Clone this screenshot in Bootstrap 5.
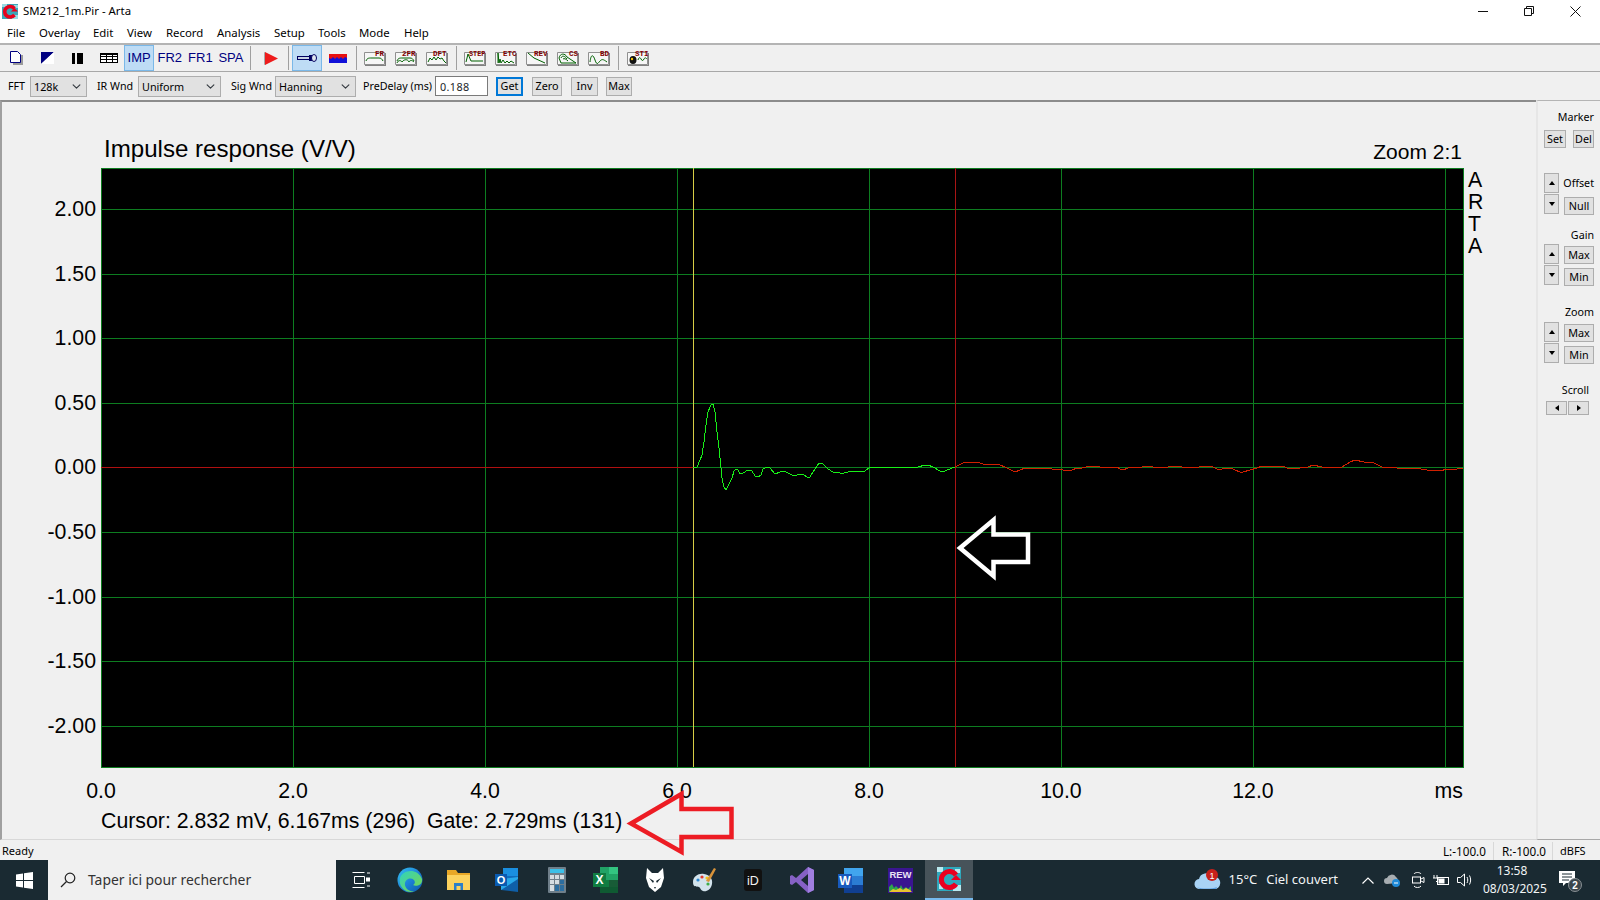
<!DOCTYPE html>
<html lang="fr">
<head>
<meta charset="utf-8">
<title>SM212_1m.Pir - Arta</title>
<link href="https://cdn.jsdelivr.net/npm/bootstrap@5.3.0/dist/css/bootstrap.min.css" rel="stylesheet">
<style>
:root{--ui:"Noto Sans","Open Sans",sans-serif;--ar:"Liberation Sans",Arial,sans-serif;}
html,body{height:100%;margin:0;}
body{width:1600px;height:900px;overflow:hidden;background:#f0f0f0;font-family:var(--ui);font-size:10.7px;color:#000;position:relative;}
svg{display:block;flex:none;}
.title-row{height:22px;background:#fff;font-size:11.4px;}
.title-row .app-name{margin-left:5px;}
.win-ctl{width:46px;}
.win-ctl-wrap{margin-right:2px;}
.menu-row{display:grid;grid-template-columns:32px 54px 34px 39px 51px 57px 44px 41px 45px 45px;height:21px;padding-left:7px;background:#fff;font-size:11.4px;line-height:22px;}
.tool-row{height:29px;border-top:2px solid #b4b4b4;border-bottom:1px solid #a8a8a8;padding-left:1.5px;}
.tb{width:30.6px;height:26px;border:1px solid transparent;color:#000080;font-family:var(--ar);font-size:13px;padding:0;}
.tb.wide{width:31.1px;}
.tb.on{background:#bedcf5;border-color:#7ab8e8;}
.tb-sep{width:1px;height:24px;background:#a0a0a0;margin:0 4px;}
.tb-sep.tight{margin:0 3px 0 2px;}
.tb-sep.s6{margin:0 2.8px;}
.tb-sep.s7{margin:0 3px;}
.ctl-row{height:28px;padding-left:8px;}
.lbl{white-space:nowrap;line-height:1;}
.w-fft{width:22px;}.w-ir{width:41px;margin-left:10px;}.w-sig{width:44px;margin-left:10px;}.w-pre{width:72px;margin-left:7px;}
.wsel.form-select{height:21px;border-radius:0;border:1px solid #adadad;background-color:#e1e1e1;padding:0 0 0 3px;font-size:10.8px;color:#000;background-position:right 4px center;background-size:11px 9px;line-height:19px;box-shadow:none;}
.s-fft.form-select{width:57px;}.s-ir.form-select{width:83px;}.s-sig.form-select{width:81px;}
.pre-input.form-control{width:53px;height:20px;margin-left:0;padding:0 4px;border:1px solid #7a7a7a;border-radius:0;font-size:10.8px;letter-spacing:.4px;min-height:0;}
.wbtn.btn{padding:0;border-radius:0;background:#e1e1e1;border:1px solid #adadad;color:#000;font-family:var(--ui);font-size:10.8px;line-height:1;display:flex;align-items:center;justify-content:center;}
.wbtn.focus-blue{border:2px solid #0078d7;}
.b-get{width:27px;height:19px;margin-left:8px;}.b-zero{width:30px;height:19px;margin-left:9px;}.b-inv{width:27px;height:19px;margin-left:9px;}.b-max{width:26px;height:19px;margin-left:8px;}
.main-row{height:740px;}
.plot-pane{width:1536px;height:740px;border-top:2px solid #8c8c8c;border-left:2px solid #a0a0a0;border-bottom:1px solid #d8d8d8;}
.side-pane{width:64px;height:740px;border-top:1px solid #b4b4b4;border-left:2px solid #e6e6e6;border-bottom:1px solid #a8a8a8;padding:9px 6px 0 6px;}
.plot-svg text{font-family:var(--ar);fill:#000;font-size:21.3px;}
.plot-svg .ttl{font-size:24.1px;}
.plot-svg .zoomtxt{font-size:21px;}
.side-label{height:14px;line-height:14px;white-space:nowrap;text-align:right;}
.set-b{width:22px;height:18px;}.del-b{width:21px;height:18px;}
.mt6{margin-top:6px;}.mt7{margin-top:7px;}.mt25{margin-top:25px;}.mt13{margin-top:13px;}.mt19{margin-top:19px;}.mt2{margin-top:2px;}.mt3{margin-top:3px;}.mt4{margin-top:4px;}
.gap7{gap:7px;}.gap1{gap:1px;}.gap4{gap:4px;}.gap5{gap:5px;}
.spin{width:15px;height:20px;}
.side-b{width:30px;height:18px;}
.offs{width:30px;}
.sc-wrap{margin-right:5px;}
.sc-b{width:21px;height:14px;}
.tri-u,.tri-d,.tri-l,.tri-r{width:0;height:0;border-style:solid;}
.tri-u{border-width:0 3.5px 4px 3.5px;border-color:transparent transparent #000 transparent;}
.tri-d{border-width:4px 3.5px 0 3.5px;border-color:#000 transparent transparent transparent;}
.tri-l{border-width:3.5px 4px 3.5px 0;border-color:transparent #000 transparent transparent;}
.tri-r{border-width:3.5px 0 3.5px 4px;border-color:transparent transparent transparent #000;}
.status-row{height:20px;padding:2px 0 0 2px;font-size:11px;line-height:18px;}
.st-l{width:50px;text-align:left;font-size:11.7px;}.st-r{width:59px;padding-left:8px;border-left:1px solid #d8d8d8;height:18px;line-height:18px;font-size:11.7px;}.st-u{width:48px;padding-left:7px;border-left:1px solid #d8d8d8;height:18px;line-height:18px;}
.task-row{height:40px;background:#1a2a32;color:#f2f5f6;}
.start-b{width:48px;height:40px;}
.search-b{width:288px;height:40px;background:#f0f0f0;color:#333;font-size:13.9px;padding-left:12px;gap:12px;}
.task-ic{width:49.05px;height:40px;}
.task-ic.on{width:48px;background:#47535a;border-bottom:2px solid #76b9ed;}
.tray{flex:1;position:relative;font-size:13px;}
.wx-cloud{margin-left:221px;}
.wx-t{margin-left:7px;}.wx-c{margin-left:9px;}
.tr-ch{margin-left:24px;}.tr-1{margin-left:10px;}.tr-2{margin-left:11px;}.tr-3{margin-left:8px;}.tr-4{margin-left:8px;}
.clock{margin-left:10px;width:58px;font-size:12px;line-height:18px;text-align:center;white-space:nowrap;}
.notif{margin-left:17px;}
.overlay-svg{position:absolute;left:0;top:0;pointer-events:none;}
</style>
</head>
<body>
<div class="title-row d-flex align-items-center">
  <svg class="ms-0" width="18" height="18" viewBox="0 0 18 18"><rect x="2" y="2" width="16" height="15" fill="#3aa6b8"/><path d="M2 2h5v3H2zM12 13h6v4h-6zM14 3h4v3h-4z" fill="#9adbe4"/><path d="M14.5 6.5A5.5 5.2 0 1 0 14.5 13" fill="none" stroke="#e8001c" stroke-width="3.6"/><path d="M11 9.5h7l-3.5-3.6z" fill="#e8001c"/></svg>
  <span class="app-name">SM212_1m.Pir - Arta</span>
  <div class="ms-auto d-flex win-ctl-wrap">
    <div class="win-ctl d-flex justify-content-center"><svg width="10" height="10" viewBox="0 0 10 10"><path d="M0 5.5h10" stroke="#111" fill="none"/></svg></div>
    <div class="win-ctl d-flex justify-content-center"><svg width="10" height="10" viewBox="0 0 10 10"><path d="M.5 2.5h7v7h-7zM2.5 2.5v-2h7v7h-2" stroke="#111" fill="none"/></svg></div>
    <div class="win-ctl d-flex justify-content-center"><svg width="11" height="11" viewBox="0 0 11 11"><path d="M.5.5l10 10M10.5.5l-10 10" stroke="#111" fill="none"/></svg></div>
  </div>
</div>
<nav class="menu-row"><span>File</span><span>Overlay</span><span>Edit</span><span>View</span><span>Record</span><span>Analysis</span><span>Setup</span><span>Tools</span><span>Mode</span><span>Help</span></nav>

<div class="tool-row d-flex align-items-center">
  <div class="tb d-flex align-items-center justify-content-center"><svg width="14" height="14" viewBox="0 0 14 14"><path d="M3 4h10v10H3z" fill="#9a9a9a"/><path d="M.5.5h7l3 3v8h-10z" fill="#fff" stroke="#000080"/></svg></div>
  <div class="tb d-flex align-items-center justify-content-center"><svg width="13" height="12" viewBox="0 0 13 12"><path d="M0 0h13L0 12z" fill="#000080"/><path d="M13 0v12H0z" fill="#fff"/></svg></div>
  <div class="tb d-flex align-items-center justify-content-center"><svg width="11" height="11" viewBox="0 0 11 11"><rect width="3" height="11"/><rect x="5" width="6" height="11"/></svg></div>
  <div class="tb d-flex align-items-center justify-content-center"><svg width="18" height="10" viewBox="0 0 18 10" shape-rendering="crispEdges"><path d="M.5.5h17v9H.5zM.5 3.5h17M.5 6.5h17M6.5.5v9M12.5.5v9" fill="#fff" stroke="#000"/><path d="M0 0h18v2H0z"/></svg></div>
  <div class="tb on d-flex align-items-center justify-content-center">IMP</div>
  <div class="tb d-flex align-items-center justify-content-center">FR2</div>
  <div class="tb d-flex align-items-center justify-content-center">FR1</div>
  <div class="tb d-flex align-items-center justify-content-center">SPA</div>
  <div class="tb-sep"></div>
  <div class="tb d-flex align-items-center justify-content-center"><svg width="16" height="15" viewBox="0 0 16 15"><path d="M1 1v13l2-1V2z" fill="#a8a8a8"/><path d="M2 1l13 6.5L2 14z" fill="#ee1c1c"/></svg></div>
  <div class="tb-sep tight"></div>
  <div class="tb on d-flex align-items-center justify-content-center"><svg width="20" height="8" viewBox="0 0 20 8"><rect x=".5" y="2.5" width="12" height="3" fill="#c8d4e4" stroke="#000060"/><rect x="12" y="1" width="4" height="6" fill="#000060"/><ellipse cx="17" cy="4" rx="2.5" ry="3.5" fill="#dfe6ee" stroke="#000060"/></svg></div>
  <div class="tb d-flex align-items-center justify-content-center"><svg width="18" height="9" viewBox="0 0 18 9"><rect width="18" height="9" fill="#1111d8"/><path d="M0 0h18v4l-2-1-2 2-2-2-2 2-2-2-2 2-2-2-2 2-2-1z" fill="#e81010"/></svg></div>
  <div class="tb-sep s6"></div>
  <div class="tb wide d-flex align-items-center justify-content-center"><svg width="22" height="16" viewBox="0 0 22 16"><path d="M.5 2.5h20v12H.5z" fill="#f6f6f6" stroke="#909090"/><path d="M1 15.5h21M21.5 3v13" stroke="#808080" fill="none"/><path d="M2 11c1-3 3-3 5-3h8c2 0 3 1 4 3" fill="none" stroke="#006000"/><text x="11" y="6" font-family="Liberation Mono" font-size="7.5" font-weight="700" fill="#800000">FR</text></svg></div>
  <div class="tb wide d-flex align-items-center justify-content-center"><svg width="22" height="16" viewBox="0 0 22 16"><path d="M.5 2.5h20v12H.5z" fill="#f6f6f6" stroke="#909090"/><path d="M1 15.5h21M21.5 3v13" stroke="#808080" fill="none"/><path d="M2 11c1-3 3-3 5-3h8c2 0 3 1 4 3M2 13c1-3 4-3 5-1 2-3 6-3 7 0 1-2 3-2 5 0" fill="none" stroke="#006000"/><text x="7" y="6" font-family="Liberation Mono" font-size="7.5" font-weight="700" fill="#800000">2FR</text></svg></div>
  <div class="tb wide d-flex align-items-center justify-content-center"><svg width="22" height="16" viewBox="0 0 22 16"><path d="M.5 2.5h20v12H.5z" fill="#f6f6f6" stroke="#909090"/><path d="M1 15.5h21M21.5 3v13" stroke="#808080" fill="none"/><path d="M2 12l2-4 2 2 2-3 2 3 2-3 2 2 2-1 2 3 2 2" fill="none" stroke="#006000"/><text x="7" y="6" font-family="Liberation Mono" font-size="7.5" font-weight="700" fill="#800000">DFT</text></svg></div>
  <div class="tb-sep s6"></div>
  <div class="tb wide d-flex align-items-center justify-content-center"><svg width="22" height="16" viewBox="0 0 22 16"><path d="M.5 2.5h20v12H.5z" fill="#f6f6f6" stroke="#909090"/><path d="M1 15.5h21M21.5 3v13" stroke="#808080" fill="none"/><path d="M2 12l2-8 3 7h12" fill="none" stroke="#006000"/><text x="5" y="6" font-family="Liberation Mono" font-size="6.8" font-weight="700" fill="#800000">STEP</text></svg></div>
  <div class="tb wide d-flex align-items-center justify-content-center"><svg width="22" height="16" viewBox="0 0 22 16"><path d="M.5 2.5h20v12H.5z" fill="#f6f6f6" stroke="#909090"/><path d="M1 15.5h21M21.5 3v13" stroke="#808080" fill="none"/><path d="M3 13V3l1 10 1-4 1 4 2-3 2 3 2-2 2 2 2-2 3 2" fill="none" stroke="#006000"/><text x="8" y="6" font-family="Liberation Mono" font-size="7.5" font-weight="700" fill="#800000">ETC</text></svg></div>
  <div class="tb wide d-flex align-items-center justify-content-center"><svg width="22" height="16" viewBox="0 0 22 16"><path d="M.5 2.5h20v12H.5z" fill="#f6f6f6" stroke="#909090"/><path d="M1 15.5h21M21.5 3v13" stroke="#808080" fill="none"/><path d="M2 3l6 5 11 5" fill="none" stroke="#006000"/><text x="8" y="6" font-family="Liberation Mono" font-size="7.5" font-weight="700" fill="#800000">REV</text></svg></div>
  <div class="tb wide d-flex align-items-center justify-content-center"><svg width="22" height="16" viewBox="0 0 22 16"><path d="M.5 2.5h20v12H.5z" fill="#f6f6f6" stroke="#909090"/><path d="M1 15.5h21M21.5 3v13" stroke="#808080" fill="none"/><path d="M2 8c1-5 6-5 8-1l9 6H4zM4 8c1-3 4-2 6 1M6 9c1-1 3 0 5 2" fill="none" stroke="#006000"/><text x="12" y="6" font-family="Liberation Mono" font-size="7.5" font-weight="700" fill="#800000">CS</text></svg></div>
  <div class="tb wide d-flex align-items-center justify-content-center"><svg width="22" height="16" viewBox="0 0 22 16"><path d="M.5 2.5h20v12H.5z" fill="#f6f6f6" stroke="#909090"/><path d="M1 15.5h21M21.5 3v13" stroke="#808080" fill="none"/><path d="M2 12c1-8 3-8 5-2s3 3 5 1 3-2 7 1" fill="none" stroke="#006000"/><text x="12" y="6" font-family="Liberation Mono" font-size="7.5" font-weight="700" fill="#800000">BD</text></svg></div>
  <div class="tb-sep s7"></div>
  <div class="tb wide d-flex align-items-center justify-content-center"><svg width="22" height="16" viewBox="0 0 22 16"><path d="M.5 2.5h20v12H.5z" fill="#f6f6f6" stroke="#909090"/><path d="M1 15.5h21M21.5 3v13" stroke="#808080" fill="none"/><ellipse cx="6" cy="10" rx="3.5" ry="4" fill="#111"/><circle cx="5" cy="9" r="1.2" fill="#f3c300"/><path d="M11 10c1-3 2-3 3-1s2 2 3 0 2-1 3 0" fill="none" stroke="#006000"/><text x="8" y="6" font-family="Liberation Mono" font-size="7.5" font-weight="700" fill="#800000">STI</text></svg></div>
</div>

<div class="ctl-row d-flex align-items-center">
  <span class="lbl w-fft">FFT</span>
  <select class="form-select wsel s-fft"><option>128k</option></select>
  <span class="lbl w-ir">IR Wnd</span>
  <select class="form-select wsel s-ir"><option>Uniform</option></select>
  <span class="lbl w-sig">Sig Wnd</span>
  <select class="form-select wsel s-sig"><option>Hanning</option></select>
  <span class="lbl w-pre">PreDelay (ms)</span>
  <input class="form-control pre-input" value="0.188">
  <button class="btn wbtn focus-blue b-get">Get</button>
  <button class="btn wbtn b-zero">Zero</button>
  <button class="btn wbtn b-inv">Inv</button>
  <button class="btn wbtn b-max">Max</button>
</div>

<div class="main-row d-flex">
  <div class="plot-pane">
    <svg class="plot-svg" width="1534" height="737" viewBox="2 102 1534 737">
      <rect x="101" y="168" width="1362" height="599" fill="#000"/>
      <g stroke="#0d7d20" fill="none" shape-rendering="crispEdges">
        <path d="M293.5 168v599M485.5 168v599M677.5 168v599M869.5 168v599M1061.5 168v599M1253.5 168v599M1445.5 168v599"/>
        <path d="M101 209.5h1362M101 274.5h1362M101 338.5h1362M101 403.5h1362M693 467.5h770M101 532.5h1362M101 597.5h1362M101 661.5h1362M101 726.5h1362"/>
        <rect x="101.5" y="168.5" width="1362" height="599"/>
      </g>
      <g fill="none" shape-rendering="crispEdges">
        <path d="M101 467.5h592" stroke="#b01010"/>
        <path d="M693.5 168v599" stroke="#d6cc45"/>
        <path d="M955.5 168v599" stroke="#a81515"/>
        <polyline stroke="#18f018" points="693,467 697,467 700,460 702,455 704,442 706,425 708,412 711,405 713,404 715,412 717,432 719,448 721,468 722,478 724,487 726,490 728,486 732,478 734,471 736,469 738,470 740,474 743,473 748,470 752,471 755,476 758,477 761,475 763,469 767,467 770,468 775,474 780,472 784,471 788,473 794,476 797,475 803,474 807,477 810,477 813,472 817,466 819,463 822,463 828,469 833,472 840,473 844,473 848,472 865,471 870,467 905,467 911,468 918,467 925,465 928,465 933,467 940,471 945,471 952,468 955,467"/>
        <polyline stroke="#d02000" points="955,467 963,463 970,462 977,462 983,464 998,464 1007,468 1015,472 1025,468 1033,468 1052,469 1060,469 1063,470 1072,470 1077,468 1082,468 1090,466 1098,466 1100,467 1117,467 1120,469 1123,470 1128,468 1142,467 1143,466 1151,466 1153,467 1168,467 1170,466 1181,466 1182,467 1199,467 1201,466 1211,466 1217,469 1222,469 1226,468 1231,468 1235,470 1240,472 1243,472 1250,470 1257,468 1262,466 1279,466 1285,467 1287,468 1300,468 1308,467 1313,465 1322,467 1342,467 1350,462 1355,460 1364,462 1372,462 1382,467 1388,467 1397,468 1415,468 1427,470 1442,471 1445,469 1457,469 1463,468"/>
      </g>
      <text class="ttl" x="104" y="157">Impulse response (V/V)</text>
      <text class="zoomtxt" x="1462" y="159" text-anchor="end">Zoom 2:1</text>
      <text x="1468" y="187">A</text><text x="1468" y="209">R</text><text x="1468" y="231">T</text><text x="1468" y="253">A</text>
      <g text-anchor="end">
        <text x="96" y="216">2.00</text><text x="96" y="281">1.50</text><text x="96" y="345">1.00</text><text x="96" y="410">0.50</text><text x="96" y="474">0.00</text><text x="96" y="539">-0.50</text><text x="96" y="604">-1.00</text><text x="96" y="668">-1.50</text><text x="96" y="733">-2.00</text>
      </g>
      <g text-anchor="middle">
        <text x="101" y="798">0.0</text><text x="293" y="798">2.0</text><text x="485" y="798">4.0</text><text x="677" y="798">6.0</text><text x="869" y="798">8.0</text><text x="1061" y="798">10.0</text><text x="1253" y="798">12.0</text>
      </g>
      <text x="1463" y="798" text-anchor="end">ms</text>
      <text x="101" y="828" xml:space="preserve">Cursor: 2.832 mV, 6.167ms (296)  Gate: 2.729ms (131)</text>
    </svg>
  </div>
  <aside class="side-pane d-flex flex-column align-items-end">
    <div class="side-label">Marker</div>
    <div class="d-flex gap7 mt6"><button class="btn wbtn set-b">Set</button><button class="btn wbtn del-b">Del</button></div>

    <div class="d-flex gap5 mt25">
      <div class="d-flex flex-column gap1"><button class="btn wbtn spin"><i class="tri-u"></i></button><button class="btn wbtn spin"><i class="tri-d"></i></button></div>
      <div class="offs d-flex flex-column align-items-end"><div class="side-label mt3">Offset</div><button class="btn wbtn side-b mt7">Null</button></div>
    </div>

    <div class="side-label mt13">Gain</div>
    <div class="d-flex gap5 mt2">
      <div class="d-flex flex-column gap1"><button class="btn wbtn spin"><i class="tri-u"></i></button><button class="btn wbtn spin"><i class="tri-d"></i></button></div>
      <div class="d-flex flex-column gap4 mt2"><button class="btn wbtn side-b">Max</button><button class="btn wbtn side-b">Min</button></div>
    </div>

    <div class="side-label mt19">Zoom</div>
    <div class="d-flex gap5 mt3">
      <div class="d-flex flex-column gap1"><button class="btn wbtn spin"><i class="tri-u"></i></button><button class="btn wbtn spin"><i class="tri-d"></i></button></div>
      <div class="d-flex flex-column gap4 mt2"><button class="btn wbtn side-b">Max</button><button class="btn wbtn side-b">Min</button></div>
    </div>

    <div class="side-label mt19 sc-wrap">Scroll</div>
    <div class="d-flex mt4 gap1 sc-wrap"><button class="btn wbtn sc-b"><i class="tri-l"></i></button><button class="btn wbtn sc-b"><i class="tri-r"></i></button></div>
  </aside>
</div>

<div class="status-row d-flex align-items-center">
  <span>Ready</span>
  <span class="ms-auto st-l">L:-100.0</span><span class="st-r">R:-100.0</span><span class="st-u">dBFS</span>
</div>

<footer class="task-row d-flex align-items-center">
  <div class="start-b d-flex align-items-center justify-content-center"><svg width="17" height="17" viewBox="0 0 17 17"><path d="M0 2.4L7 1.4V8H0zM8 1.3L17 0v8H8zM0 9h7v6.6L0 14.6zM8 9h9v8l-9-1.3z" fill="#fff"/></svg></div>
  <div class="search-b d-flex align-items-center"><svg width="16" height="16" viewBox="0 0 16 16"><circle cx="10" cy="6" r="4.8" fill="none" stroke="#222" stroke-width="1.2"/><path d="M6.5 9.5L1 15" stroke="#222" stroke-width="1.3"/></svg><span>Taper ici pour rechercher</span></div>
  <div class="d-flex">
    <div class="task-ic d-flex align-items-center justify-content-center"><svg width="18" height="18" viewBox="0 0 18 18" fill="none" stroke="#fff"><path d="M.5 1.5h12M.5 16.5h12M2.5 5.5h10v7h-10z"/><path d="M15 2h3M15 15h3" /><rect x="14.5" y="7" width="3" height="3" fill="#fff"/></svg></div>
    <div class="task-ic d-flex align-items-center justify-content-center"><svg width="26" height="26" viewBox="0 0 26 26"><defs><linearGradient id="edg" x1="0" y1="0" x2="1" y2="1"><stop offset="0" stop-color="#35c1f1"/><stop offset=".55" stop-color="#1b7fd6"/><stop offset="1" stop-color="#0c59a4"/></linearGradient><linearGradient id="edg2" x1="0" y1="0" x2="1" y2="1"><stop offset="0" stop-color="#2ed3c0"/><stop offset="1" stop-color="#7cd64a"/></linearGradient></defs><circle cx="13" cy="13" r="12.5" fill="url(#edg)"/><path d="M3 11C5 3 20 0 25 12c1 6-6 8-9 6 4-2 1-8-5-6-4 2-4 7-1 10 1 1 4 3 7 2.5C9 27 1 20 3 11z" fill="url(#edg2)"/></svg></div>
    <div class="task-ic d-flex align-items-center justify-content-center"><svg width="23" height="22" viewBox="0 0 23 22"><path d="M0 1h9l2 3h12v16H0z" fill="#e8a727"/><path d="M0 6h23v15H0z" fill="#fcd25e"/><path d="M7 14h9v7h-2.5v-4h-4v4H7z" fill="#2c7fc9"/></svg></div>
    <div class="task-ic d-flex align-items-center justify-content-center"><svg width="25" height="24" viewBox="0 0 25 24"><path d="M8 0h15v8H8z" fill="#1a8fe0"/><path d="M8 8h15v5H8z" fill="#0f6cbd"/><path d="M6 11l17-2v13H6z" fill="#28a8ea"/><path d="M6 22l17-11v13z" fill="#0f5fa8"/><rect y="6" width="12" height="12" fill="#0a5ab0"/><text x="6" y="16" text-anchor="middle" font-family="Liberation Sans" font-weight="700" font-size="11" fill="#fff">O</text></svg></div>
    <div class="task-ic d-flex align-items-center justify-content-center"><svg width="18" height="26" viewBox="0 0 18 26"><rect width="18" height="26" rx="1" fill="#6f7f8a"/><rect x="2" y="2" width="14" height="4" fill="#3cc0e8"/><g fill="#d5dde2"><rect x="2" y="8" width="4" height="4"/><rect x="7" y="8" width="4" height="4"/><rect x="12" y="8" width="4" height="4"/><rect x="2" y="13" width="4" height="4"/><rect x="7" y="13" width="4" height="4"/><rect x="2" y="18" width="4" height="6"/></g><g fill="#2c6ea0"><rect x="12" y="13" width="4" height="4"/><rect x="7" y="18" width="4" height="6"/><rect x="12" y="18" width="4" height="6"/></g></svg></div>
    <div class="task-ic d-flex align-items-center justify-content-center"><svg width="25" height="26" viewBox="0 0 25 26"><path d="M7 0h18v26H7z" fill="#21a366"/><path d="M16 0h9v7h-9z" fill="#33c481"/><path d="M7 13h9v7H7z" fill="#107c41"/><path d="M16 13h9v7h-9z" fill="#185c37"/><path d="M7 20h18v6H7z" fill="#0f5a32"/><rect y="6" width="13" height="14" fill="#107c41"/><text x="6.5" y="17" text-anchor="middle" font-family="Liberation Sans" font-weight="700" font-size="12" fill="#fff">X</text></svg></div>
    <div class="task-ic d-flex align-items-center justify-content-center"><svg width="18" height="24" viewBox="0 0 18 24"><path d="M1 0l5 5h6l5-5 1 10-3 9-6 5-6-5-3-9z" fill="#fff"/><path d="M3 10l5 3-1 2zM15 10l-5 3 1 2z" fill="#1a2a32"/><path d="M8 19h2l-1 2z" fill="#1a2a32"/></svg></div>
    <div class="task-ic d-flex align-items-center justify-content-center"><svg width="24" height="26" viewBox="0 0 24 26"><path d="M1 15C1 9 7 6 12 7c6 1 9 5 8 10-1 6-6 8-9 7C8 23 9 21 7 20c-2-1-6 1-6-5z" fill="#d3e3ec"/><circle cx="6" cy="13" r="1.6" fill="#2b87d1"/><circle cx="10" cy="10" r="1.6" fill="#e03a2f"/><circle cx="15" cy="11" r="1.6" fill="#f5c518"/><circle cx="16" cy="17" r="1.6" fill="#3fae49"/><path d="M14 14L22 1l2 1-7 13z" fill="#d8933a"/></svg></div>
    <div class="task-ic d-flex align-items-center justify-content-center"><svg width="18" height="22" viewBox="0 0 18 22"><rect width="18" height="22" rx="3" fill="#111"/><text x="9" y="15.5" text-anchor="middle" font-family="Liberation Sans" font-size="12.5" fill="#f2f2f2">iD</text></svg></div>
    <div class="task-ic d-flex align-items-center justify-content-center"><svg width="24" height="26" viewBox="0 0 24 26"><path d="M18 0l6 3v20l-6 3L6 15l-4 3-2-1V9l2-1 4 3zM18 7l-7 6 7 6z" fill="#8661c5"/><path d="M18 0l6 3v20l-6 3z" fill="#a07ee0"/></svg></div>
    <div class="task-ic d-flex align-items-center justify-content-center"><svg width="25" height="25" viewBox="0 0 25 25"><path d="M6 0h19v25H6z" fill="#2b7cd3"/><path d="M6 0h19v8H6z" fill="#41a5ee"/><path d="M6 17h19v8H6z" fill="#103f91"/><rect y="6" width="14" height="14" fill="#185abd"/><text x="7" y="17" text-anchor="middle" font-family="Liberation Sans" font-weight="700" font-size="12" fill="#fff">W</text></svg></div>
    <div class="task-ic d-flex align-items-center justify-content-center"><svg width="25" height="25" viewBox="0 0 25 25"><rect width="25" height="25" fill="#3a1590"/><text x="12.5" y="10" text-anchor="middle" font-family="Liberation Sans" font-weight="700" font-size="9.5" fill="#e9e3f5">REW</text><path d="M1 24V19l3-3 2 4 2-2 3 3 2-4 2 4 3-2 2 2 3-3v6z" fill="#2ea64a"/><path d="M1 24l4-3 3 1 4-2 3 2 3-2 4 2 2 2z" fill="#e8c430"/></svg></div>
    <div class="task-ic on d-flex align-items-center justify-content-center"><svg width="24" height="24" viewBox="0 0 24 24"><rect width="24" height="24" fill="#2fa9bd"/><path d="M0 0h6v5H0zM16 18h8v6h-8zM18 2h5v4h-5zM2 17h4v5H2z" fill="#b9e9ef"/><path d="M19 8A8 8 0 1 0 19 17" fill="none" stroke="#ea0020" stroke-width="5"/><path d="M14 13h10l-5-5z" fill="#ea0020"/></svg></div>
  </div>
  <div class="tray d-flex align-items-center">
    <div class="wx-cloud position-relative"><svg width="28" height="24" viewBox="0 0 28 24"><path d="M6 21a5 5 0 0 1-1-10 7 7 0 0 1 13-2 6 6 0 0 1 4 12z" fill="#a9d3f5"/><path d="M3 19c4 2 15 2 20 0l-1 2H6z" fill="#5c9fe0"/><circle cx="18" cy="7" r="6" fill="#c8211b"/><text x="18" y="10.5" text-anchor="middle" font-family="Liberation Sans" font-size="9" fill="#fff">1</text></svg></div>
    <span class="wx-t">15°C</span><span class="wx-c">Ciel couvert</span>
    <svg class="tr-ch" width="12" height="7" viewBox="0 0 12 7"><path d="M.5 6.5L6 1l5.500 5.500" fill="none" stroke="#fff" stroke-width="1.2"/></svg>
    <svg class="tr-1" width="17" height="13" viewBox="0 0 17 13"><path d="M3 10a3 3 0 0 1 0-6 5 5 0 0 1 9-1 4 4 0 0 1 1 6z" fill="#a7adb1"/><circle cx="12" cy="9" r="4" fill="#1f8ad8"/><path d="M10 9h4" stroke="#fff"/></svg>
    <svg class="tr-2" width="13" height="18" viewBox="0 0 13 18" fill="none" stroke="#fff"><path d="M2 3c1-2 6-2 7 0M2 15c1 2 6 2 7 0"/><rect x=".5" y="6" width="8" height="6"/><path d="M9 8l3-1.500v5L9 10"/></svg>
    <svg class="tr-3" width="16" height="12" viewBox="0 0 16 12" fill="none" stroke="#fff"><rect x="4.500" y="3.500" width="11" height="7"/><rect x="5.500" y="4.500" width="6" height="5" fill="#fff" stroke="none"/><path d="M1 1v3M4 1v3M0 4h5v2l-2 2" /></svg>
    <svg class="tr-4" width="16" height="14" viewBox="0 0 16 14" fill="none" stroke="#fff"><path d="M.5 4.500h3L7.500 1v12l-4-3.500h-3z"/><path d="M10 4c1 2 1 4 0 6M12.500 2.500c1.500 3 1.500 6 0 9"/></svg>
    <div class="clock"><div>13:58</div><div>08/03/2025</div></div>
    <div class="notif position-relative"><svg width="24" height="24" viewBox="0 0 24 24"><path d="M1 3h16v12H8l-3 3v-3H1z" fill="#fff"/><path d="M4 6h10M4 9h10M4 12h7" stroke="#1a2a32"/><circle cx="17" cy="17" r="6.500" fill="#3b464c" stroke="#888f93"/><text x="17" y="20.500" text-anchor="middle" font-family="Liberation Sans" font-weight="700" font-size="10" fill="#fff">2</text></svg></div>
  </div>
</footer>

<svg class="overlay-svg" width="1600" height="900" viewBox="0 0 1600 900">
  <path d="M960 548L993.500 520V534.500H1028V562H993.500V576z" fill="none" stroke="#fff" stroke-width="4.5"/>
  <path d="M631 823.500L681.500 794V809H731.500V837H681.500V852z" fill="none" stroke="#ed1c24" stroke-width="4.5"/>
</svg>
</body>
</html>
